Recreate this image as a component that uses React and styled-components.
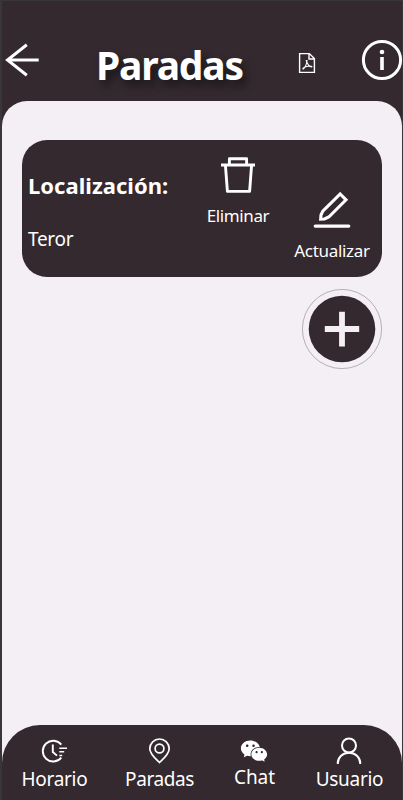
import React from "react";
import styled, { createGlobalStyle } from "styled-components";
import { AiFillWechat } from "react-icons/ai";

const GlobalStyle = createGlobalStyle`
  *{box-sizing:border-box}
  body{margin:0;background:#33292e;overflow:hidden}
`;
const Screen = styled.div`
  width:403px;height:800px;display:flex;flex-direction:column;
  background:#33292e;color:#fff;font-family:"Noto Sans","Open Sans",sans-serif;
  border-left:2px solid #38363b;border-right:1px solid #38363b;border-top:1px solid #38363b;
`;
const Header = styled.header`
  height:100px;flex:none;display:flex;align-items:flex-start;
`;
const Back = styled.svg`display:block;width:36px;height:36px;margin:41px 0 0 2px;`;
const Title = styled.h1`
  margin:37px 0 0 56px;width:150px;font-size:39px;line-height:54px;font-weight:700;
  letter-spacing:${p => p.$spacing}px;white-space:nowrap;text-shadow:4px 6px 8px rgba(0,0,0,.5);
`;
const Pdf = styled.svg`display:block;width:18px;height:22px;margin:51px 0 0 52px;`;
const Info = styled.svg`display:block;width:42px;height:42px;margin:38px -1px 0 45px;flex:none;`;
const Main = styled.main`
  height:624px;flex:none;background:#f4eff5;border-radius:25px 25px 0 0;padding:39px 20px 0;
  display:flex;flex-direction:column;
`;
const Card = styled.article`
  height:137px;flex:none;border-radius:25px;background:#33292e;display:flex;
`;
const Details = styled.div`width:173px;padding:29px 0 0 6px;`;
const Label = styled.div`
  font-size:22px;line-height:32px;font-weight:700;letter-spacing:${p => p.$spacing}px;white-space:nowrap;
`;
const Value = styled.div`
  font-size:19px;line-height:28px;margin-top:24px;letter-spacing:${p => p.$spacing}px;
`;
const Action = styled.button`
  width:86px;padding:0;margin-top:${p => p.$top}px;border:0;background:none;color:inherit;font-family:inherit;
  display:flex;flex-direction:column;align-items:center;align-self:flex-start;flex:none;
  svg{display:block;width:${p => p.$icon}px;height:${p => p.$icon}px}
`;
const ActionText = styled.span`
  font-size:17px;line-height:24px;margin-top:${p => p.$gap}px;letter-spacing:${p => p.$spacing}px;white-space:nowrap;
`;
const Spacer = styled.div`width:8px;`;
const Add = styled.button`
  width:80px;height:80px;flex:none;padding:0;border:0;background:none;align-self:flex-end;margin-top:12px;
  svg{display:block;width:80px;height:80px}
`;
const NavBack = styled.div`background:#f4eff5;flex:none;height:75px;`;
const Nav = styled.nav`
  height:75px;background:#33292e;border-radius:38px 38px 0 0;display:flex;
`;
const NavItem = styled.a`
  width:${p => p.$width}px;flex:none;display:flex;flex-direction:column;align-items:center;padding-top:11px;
  svg{display:block;width:30px;height:30px;flex:none;margin-left:-2px}
`;
const NavText = styled.span`
  font-size:19px;line-height:26px;letter-spacing:${p => p.$spacing}px;white-space:nowrap;
  margin-top:${p => p.$lift ? -p.$lift : 0}px;
`;

const line = { fill: "none", stroke: "currentColor" };

const TrashIcon = () => (
  <svg viewBox="0 0 46 46" {...line} strokeWidth="2.9" strokeLinejoin="round">
    <path d="M6 13H40M14.4 12.5V6.8H31.6V12.5M10.4 13L12.4 39.4H34.6L36.6 13" />
  </svg>
);
const PencilIcon = () => (
  <svg viewBox="0 0 50 50" {...line} strokeWidth="3.1">
    <path d="M33.2 8L39 13.8L21.8 31L17.5 33L13.7 33.2L14 29L15.8 25.2Z" />
    <path d="M8.2 40.1H41.8" strokeLinecap="round" strokeWidth="3.2" />
  </svg>
);
const ClockIcon = () => (
  <svg viewBox="0 0 30 30" {...line} strokeWidth="1.9">
    <path d="M22.3 8.6A10.4 10.4 0 1 0 22.3 21.6" />
    <path d="M13.8 8.5V16L18 19.6" />
    <path d="M20.3 12.2H28M20.3 15.8H25.2M20.3 19.4H23.2" strokeWidth="1.5" />
  </svg>
);
const PinIcon = () => (
  <svg viewBox="0 0 30 30" {...line} strokeWidth="1.7">
    <path d="M15.5 26.5C12.8 23.8 5.8 18.2 5.8 12.7a9.7 9.7 0 0 1 19.4 0C25.2 18.2 18.2 23.8 15.5 26.5Z" />
    <circle cx="15.5" cy="12.5" r="4.4" />
  </svg>
);
const UserIcon = () => (
  <svg viewBox="0 0 30 30" {...line} strokeWidth="2">
    <circle cx="15" cy="9.5" r="7" />
    <path d="M3.8 28V27a11.2 10.2 0 0 1 22.4 0V28" />
  </svg>
);

export default function App() {
  return (
    <>
      <GlobalStyle />
      <Screen>
        <Header>
          <Back viewBox="0 0 36 36" {...line} strokeWidth="3">
            <path d="M22.8 2.8L3.5 18L22.8 33.2M3 18H34.7" />
          </Back>
          <Title $spacing={-1.2}>Paradas</Title>
          <Pdf viewBox="0 0 18 22" {...line} strokeWidth="1.4">
            <path d="M1.6 1.6H11.4L16.4 6.6V20.4H1.6ZM11 1.6V7H16.4" />
            <path d="M8.3 8.5C9.5 12.5 11.5 14.6 13.5 15C14.5 15 14 13.8 11.5 14C8 14.4 5 15.5 4.8 16.8C5.2 18 8.8 13.5 9 8.5Z" strokeWidth="1.1" />
          </Pdf>
          <Info viewBox="0 0 42 42">
            <circle cx="21" cy="21" r="18.6" {...line} strokeWidth="3" />
            <circle cx="21" cy="13" r="2.3" fill="currentColor" />
            <path d="M21 18V31" {...line} strokeWidth="3.6" />
          </Info>
        </Header>
        <Main>
          <Card>
            <Details>
              <Label $spacing={0.03}>Localización:</Label>
              <Value $spacing={-0.3}>Teror</Value>
            </Details>
            <Action $top={12} $icon={46}>
              <TrashIcon />
              <ActionText $gap={6} $spacing={-0.4}>Eliminar</ActionText>
            </Action>
            <Spacer />
            <Action $top={46} $icon={50}>
              <PencilIcon />
              <ActionText $gap={3} $spacing={-0.3}>Actualizar</ActionText>
            </Action>
          </Card>
          <Add aria-label="Añadir">
            <svg viewBox="0 0 80 80">
              <circle cx="40" cy="40" r="39.6" fill="none" stroke="#776e73" strokeWidth=".5" />
              <circle cx="40" cy="40" r="33.3" fill="#33292e" />
              <path d="M40 22.8V57.5M22.8 40H57.2" stroke="#f4eff5" strokeWidth="5.8" />
            </svg>
          </Add>
        </Main>
        <NavBack>
          <Nav>
            <NavItem $width={105}><ClockIcon /><NavText $spacing={-0.3}>Horario</NavText></NavItem>
            <NavItem $width={105}><PinIcon /><NavText $spacing={-0.4}>Paradas</NavText></NavItem>
            <NavItem $width={85}><AiFillWechat /><NavText $spacing={-0.1} $lift={2}>Chat</NavText></NavItem>
            <NavItem $width={105}><UserIcon /><NavText $spacing={-0.3}>Usuario</NavText></NavItem>
          </Nav>
        </NavBack>
      </Screen>
    </>
  );
}
